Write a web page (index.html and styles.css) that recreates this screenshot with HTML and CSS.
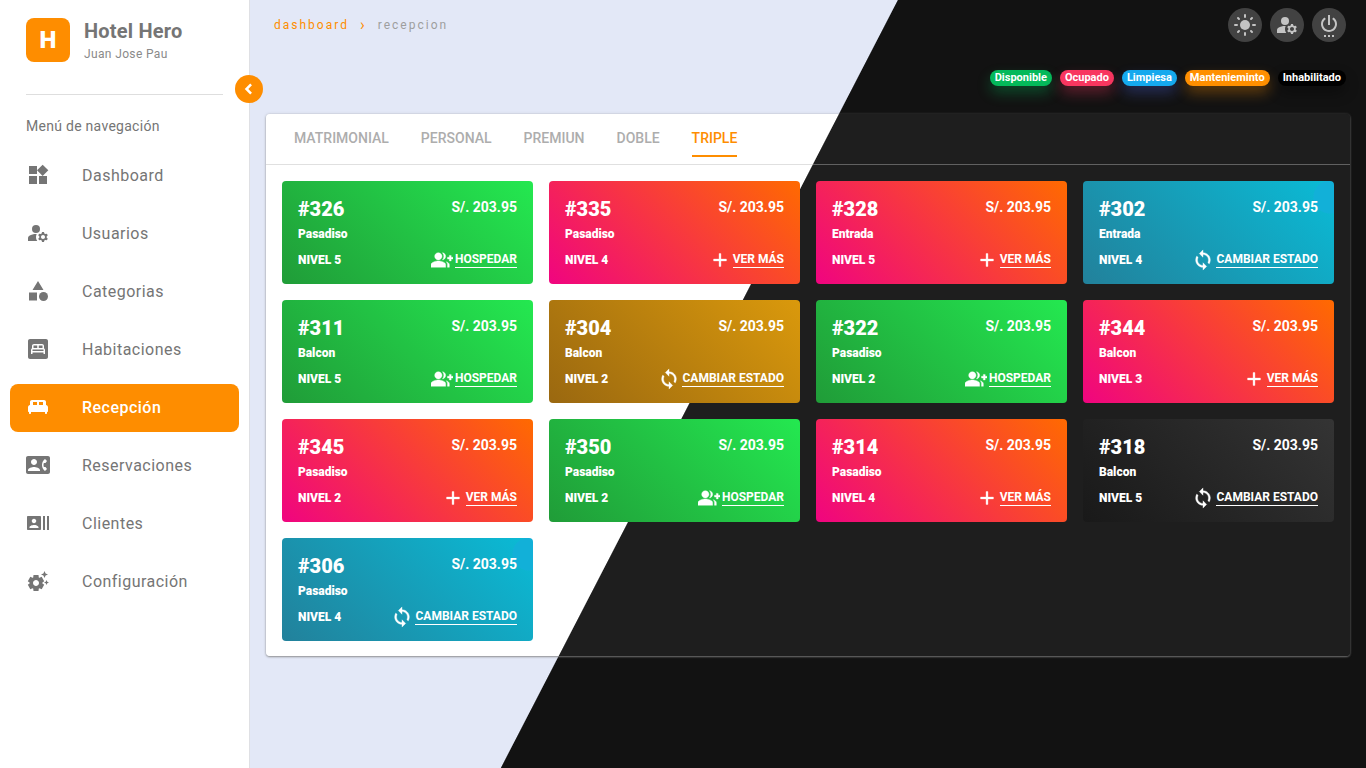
FILE: index.html
```html
<!DOCTYPE html>
<html lang="es">
<head>
<meta charset="utf-8">
<meta name="viewport" content="width=device-width, initial-scale=1">
<title>Hotel Hero - Recepción</title>
<link rel="stylesheet" href="styles.css">
</head>
<body>
<svg class="sprite" aria-hidden="true">
  <symbol id="i-widgets" viewBox="0 0 24 24"><path d="M13 13v8h8v-8h-8zM3 21h8v-8H3v8zM3 3v8h8V3H3zm13.66-1.31L11 7.34 16.66 13l5.66-5.66-5.66-5.65z"/></symbol>
  <symbol id="i-manage" viewBox="0 0 24 24"><circle cx="10" cy="8" r="4"/><path d="M10.67 13.02C10.45 13.01 10.23 13 10 13c-2.42 0-4.68.67-6.61 1.82-.88.52-1.39 1.5-1.39 2.53V20h9.26c-.79-1.13-1.26-2.51-1.26-4 0-1.07.25-2.07.67-2.98zM20.75 16c0-.22-.03-.42-.06-.63l1.14-1.01-1-1.73-1.45.49c-.32-.27-.68-.48-1.08-.63L18 11h-2l-.3 1.49c-.4.15-.76.36-1.08.63l-1.45-.49-1 1.73 1.14 1.01c-.03.21-.06.41-.06.63s.03.42.06.63l-1.14 1.01 1 1.73 1.45-.49c.32.27.68.48 1.08.63L16 21h2l.3-1.49c.4-.15.76-.36 1.08-.63l1.45.49 1-1.73-1.14-1.01c.03-.21.06-.41.06-.63zM17 18c-1.1 0-2-.9-2-2s.9-2 2-2 2 .9 2 2-.9 2-2 2z"/></symbol>
  <symbol id="i-category" viewBox="0 0 24 24"><path d="M12 2l-5.5 9h11zM3 13.500h8v8H3z"/><circle cx="17.500" cy="17.500" r="4.500"/></symbol>
  <symbol id="i-bedroom" viewBox="0 0 24 24"><path fill-rule="evenodd" d="M20 2H4c-1.100 0-2 .9-2 2v16c0 1.100.9 2 2 2h16c1.100 0 2-.9 2-2V4c0-1.100-.9-2-2-2zM19 17h-1.500v-1.500h-11V17H5v-4c0-.8.4-1.400 1-1.700V9c0-1.100.9-2 2-2h8c1.100 0 2 .9 2 2v2.300c.6.3 1 .9 1 1.700zM7.500 8.500V11h3.750V8.500zM12.750 8.500V11h3.750V8.500zM6.500 12.500V14h11v-1.500z"/></symbol>
  <symbol id="i-bed" viewBox="0 0 24 24"><path fill-rule="evenodd" d="M20 10V7c0-1.100-.9-2-2-2H6c-1.100 0-2 .9-2 2v3c-1.100.2-2 1-2 2.200V16c0 .6.4 1 1 1v1c0 .6.4 1 1 1s1-.4 1-1v-1h14v1c0 .6.4 1 1 1s1-.4 1-1v-1c.6 0 1-.4 1-1v-3.800c0-1.200-.9-2-2-2.200zM7 7h4v3H7zM13 7h4v3h-4z"/></symbol>
  <symbol id="i-contact" viewBox="0 0 24 24"><path d="M22 3H2C.9 3 0 3.900 0 5v14c0 1.100.9 2 2 2h20c1.100 0 1.990-.9 1.990-2L24 5c0-1.100-.9-2-2-2zM8 6c1.660 0 3 1.340 3 3s-1.340 3-3 3-3-1.340-3-3 1.340-3 3-3zm6 12H2v-1c0-2 4-3.100 6-3.100s6 1.100 6 3.100v1zm3.850-4h1.640L21 16l-1.990 1.990c-1.310-.98-2.280-2.380-2.730-3.990-.18-.64-.28-1.310-.28-2s.1-1.360.28-2c.45-1.620 1.420-3.010 2.730-3.990L21 8l-1.510 2h-1.640c-.22.63-.35 1.300-.35 2s.13 1.370.35 2z"/></symbol>
  <symbol id="i-actors" viewBox="0 0 24 24"><path d="M21 5v14h2V5h-2zm-4 14h2V5h-2v14zM14 5H2c-.55 0-1 .45-1 1v12c0 .55.45 1 1 1h12c.55 0 1-.45 1-1V6c0-.55-.45-1-1-1zM8 7.750c1.240 0 2.250 1.010 2.250 2.250S9.240 12.250 8 12.250 5.750 11.240 5.750 10 6.760 7.750 8 7.750zM12.500 17h-9v-.75c0-1.500 3-2.250 4.500-2.250s4.500.75 4.500 2.250V17z"/></symbol>
  <symbol id="i-settings" viewBox="0 0 24 24"><path d="M17.410 6.590L15 5.500l2.410-1.090L18.500 2l1.090 2.410L22 5.500l-2.410 1.090L18.500 9zM21.280 12.720L20.500 11l-.78 1.720L18 13.500l1.720.78L20.500 16l.78-1.720L23 13.500zM16.240 14.370l1.940 1.470-2.500 4.330-2.240-.94c-.2.13-.42.26-.64.37L12.500 22h-5l-.3-2.410c-.22-.11-.43-.23-.64-.37l-2.240.94-2.500-4.330 1.940-1.470c-.01-.12-.01-.24-.01-.36s0-.25.01-.37l-1.940-1.470 2.500-4.330 2.240.94c.2-.13.42-.26.64-.37L7.500 6h5l.3 2.410c.22.11.43.23.64.37l2.240-.94 2.500 4.330-1.940 1.470c.01.12.01.24.01.37s0 .24-.01.36zM13 14c0-1.660-1.340-3-3-3s-3 1.340-3 3 1.340 3 3 3 3-1.340 3-3z"/></symbol>
  <symbol id="i-sun" viewBox="0 0 24 24"><circle cx="12" cy="12" r="5"/><path class="stroke" d="M12 2v2M12 20v2M2 12h2M20 12h2M5 5l1 1M18 18l1 1M5 19l1-1M18 6l1-1"/></symbol>
  <symbol id="i-power" viewBox="0 0 24 24"><path d="M7 24h2v-2H7v2zm4 0h2v-2h-2v2zm2-22h-2v10h2V2zm3.560 2.440l-1.450 1.450C16.840 6.940 18 8.830 18 11c0 3.310-2.690 6-6 6s-6-2.690-6-6c0-2.170 1.160-4.060 2.880-5.120L7.440 4.440C5.360 5.880 4 8.280 4 11c0 4.420 3.580 8 8 8s8-3.580 8-8c0-2.720-1.360-5.120-3.440-6.560zM15 24h2v-2h-2v2z"/></symbol>
  <symbol id="i-left" viewBox="0 0 24 24"><path class="chevron" d="M14.500 6.500L9 12l5.500 5.500"/></symbol>
  <symbol id="i-group" viewBox="0 0 24 24"><path d="M22 9V7h-2v2h-2v2h2v2h2v-2h2V9zM8 12c2.210 0 4-1.790 4-4s-1.790-4-4-4-4 1.790-4 4 1.790 4 4 4zM8 13c-2.670 0-8 1.340-8 4v3h16v-3c0-2.660-5.330-4-8-4zM12.510 4.050C13.430 5.110 14 6.490 14 8s-.57 2.890-1.490 3.950C14.470 11.700 16 10.040 16 8s-1.530-3.700-3.490-3.950zM16.530 13.830C17.420 14.660 18 15.700 18 17v3h2v-3c0-1.450-1.590-2.510-3.470-3.170z"/></symbol>
  <symbol id="i-add" viewBox="0 0 24 24"><path d="M19 13h-6v6h-2v-6H5v-2h6V5h2v6h6z"/></symbol>
  <symbol id="i-sync" viewBox="0 0 24 24"><path d="M12 4V1L8 5l4 4V6c3.310 0 6 2.690 6 6 0 1.010-.25 1.970-.7 2.800l1.460 1.460C19.540 15.030 20 13.570 20 12c0-4.420-3.580-8-8-8zm0 14c-3.310 0-6-2.690-6-6 0-1.010.25-1.970.7-2.800L5.240 7.740C4.460 8.970 4 10.430 4 12c0 4.420 3.580 8 8 8v3l4-4-4-4v3z"/></symbol>
</svg>

<div class="app">
  <aside class="sidebar">
    <button class="toggle" type="button" aria-label="Contraer menú"><svg class="icon-sm"><use href="#i-left"/></svg></button>
    <div class="brand">
      <div class="logo">H</div>
      <div>
        <div class="brand-name">Hotel Hero</div>
        <div class="brand-user">Juan Jose Pau</div>
      </div>
    </div>
    <hr class="divider">
    <p class="nav-title">Menú de navegación</p>
    <nav class="nav">
      <a class="nav-item" href="#"><svg class="icon"><use href="#i-widgets"/></svg>Dashboard</a>
      <a class="nav-item" href="#"><svg class="icon"><use href="#i-manage"/></svg>Usuarios</a>
      <a class="nav-item" href="#"><svg class="icon"><use href="#i-category"/></svg>Categorias</a>
      <a class="nav-item" href="#"><svg class="icon"><use href="#i-bedroom"/></svg>Habitaciones</a>
      <a class="nav-item active" href="#" aria-current="page"><svg class="icon"><use href="#i-bed"/></svg>Recepción</a>
      <a class="nav-item" href="#"><svg class="icon"><use href="#i-contact"/></svg>Reservaciones</a>
      <a class="nav-item" href="#"><svg class="icon"><use href="#i-actors"/></svg>Clientes</a>
      <a class="nav-item" href="#"><svg class="icon"><use href="#i-settings"/></svg>Configuración</a>
    </nav>
  </aside>

  <main class="main">
    <header class="topbar">
      <nav class="crumbs" aria-label="Ruta"><a href="#">dashboard</a><span class="sep">›</span><span>recepcion</span></nav>
      <div class="tools">
        <button class="tool" type="button" aria-label="Tema"><svg class="icon"><use href="#i-sun"/></svg></button>
        <button class="tool" type="button" aria-label="Cuenta"><svg class="icon"><use href="#i-manage"/></svg></button>
        <button class="tool" type="button" aria-label="Salir"><svg class="icon"><use href="#i-power"/></svg></button>
      </div>
    </header>

    <div class="legend">
      <span class="badge b-free">Disponible</span>
      <span class="badge b-busy">Ocupado</span>
      <span class="badge b-clean">Limpiesa</span>
      <span class="badge b-repair">Mantenieminto</span>
      <span class="badge b-off">Inhabilitado</span>
    </div>

    <section class="panel">
      <div class="tabs" role="tablist">
        <button class="tab" type="button" role="tab">MATRIMONIAL</button>
        <button class="tab" type="button" role="tab">PERSONAL</button>
        <button class="tab" type="button" role="tab">PREMIUN</button>
        <button class="tab" type="button" role="tab">DOBLE</button>
        <button class="tab selected" type="button" role="tab" aria-selected="true">TRIPLE</button>
      </div>
      <hr class="rule">
      <div class="rooms">
        <article class="room free"><div class="row"><h2>#326</h2><b class="price">S/. 203.95</b></div><p>Pasadiso</p><div class="row foot"><span>NIVEL 5</span><a class="act" href="#"><svg class="icon-act"><use href="#i-group"/></svg><span>HOSPEDAR</span></a></div></article>
        <article class="room busy"><div class="row"><h2>#335</h2><b class="price">S/. 203.95</b></div><p>Pasadiso</p><div class="row foot"><span>NIVEL 4</span><a class="act" href="#"><svg class="icon-act"><use href="#i-add"/></svg><span>VER MÁS</span></a></div></article>
        <article class="room busy"><div class="row"><h2>#328</h2><b class="price">S/. 203.95</b></div><p>Entrada</p><div class="row foot"><span>NIVEL 5</span><a class="act" href="#"><svg class="icon-act"><use href="#i-add"/></svg><span>VER MÁS</span></a></div></article>
        <article class="room clean"><div class="row"><h2>#302</h2><b class="price">S/. 203.95</b></div><p>Entrada</p><div class="row foot"><span>NIVEL 4</span><a class="act" href="#"><svg class="icon-act"><use href="#i-sync"/></svg><span>CAMBIAR ESTADO</span></a></div></article>
        <article class="room free"><div class="row"><h2>#311</h2><b class="price">S/. 203.95</b></div><p>Balcon</p><div class="row foot"><span>NIVEL 5</span><a class="act" href="#"><svg class="icon-act"><use href="#i-group"/></svg><span>HOSPEDAR</span></a></div></article>
        <article class="room repair"><div class="row"><h2>#304</h2><b class="price">S/. 203.95</b></div><p>Balcon</p><div class="row foot"><span>NIVEL 2</span><a class="act" href="#"><svg class="icon-act"><use href="#i-sync"/></svg><span>CAMBIAR ESTADO</span></a></div></article>
        <article class="room free"><div class="row"><h2>#322</h2><b class="price">S/. 203.95</b></div><p>Pasadiso</p><div class="row foot"><span>NIVEL 2</span><a class="act" href="#"><svg class="icon-act"><use href="#i-group"/></svg><span>HOSPEDAR</span></a></div></article>
        <article class="room busy"><div class="row"><h2>#344</h2><b class="price">S/. 203.95</b></div><p>Balcon</p><div class="row foot"><span>NIVEL 3</span><a class="act" href="#"><svg class="icon-act"><use href="#i-add"/></svg><span>VER MÁS</span></a></div></article>
        <article class="room busy"><div class="row"><h2>#345</h2><b class="price">S/. 203.95</b></div><p>Pasadiso</p><div class="row foot"><span>NIVEL 2</span><a class="act" href="#"><svg class="icon-act"><use href="#i-add"/></svg><span>VER MÁS</span></a></div></article>
        <article class="room free"><div class="row"><h2>#350</h2><b class="price">S/. 203.95</b></div><p>Pasadiso</p><div class="row foot"><span>NIVEL 2</span><a class="act" href="#"><svg class="icon-act"><use href="#i-group"/></svg><span>HOSPEDAR</span></a></div></article>
        <article class="room busy"><div class="row"><h2>#314</h2><b class="price">S/. 203.95</b></div><p>Pasadiso</p><div class="row foot"><span>NIVEL 4</span><a class="act" href="#"><svg class="icon-act"><use href="#i-add"/></svg><span>VER MÁS</span></a></div></article>
        <article class="room off"><div class="row"><h2>#318</h2><b class="price">S/. 203.95</b></div><p>Balcon</p><div class="row foot"><span>NIVEL 5</span><a class="act" href="#"><svg class="icon-act"><use href="#i-sync"/></svg><span>CAMBIAR ESTADO</span></a></div></article>
        <article class="room clean"><div class="row"><h2>#306</h2><b class="price">S/. 203.95</b></div><p>Pasadiso</p><div class="row foot"><span>NIVEL 4</span><a class="act" href="#"><svg class="icon-act"><use href="#i-sync"/></svg><span>CAMBIAR ESTADO</span></a></div></article>
      </div>
    </section>
  </main>
</div>
</body>
</html>
```
FILE: styles.css
```css
:root {
  --accent: #fe8d00;
  --grey: #757575;
  --cut: calc(50% + 14px);
  --cut-end: calc(50% + 15px);
}

* { box-sizing: border-box; }

body {
  margin: 0;
  font-family: Roboto, "Liberation Sans", sans-serif;
  background: linear-gradient(117.34deg, #e3e8f7 var(--cut), #121212 var(--cut-end)) fixed;
}

a { color: inherit; text-decoration: none; }
button { font: inherit; border: 0; padding: 0; background: none; cursor: pointer; }
svg { fill: currentColor; flex: none; display: block; }
h2, p { margin: 0; }

.sprite { position: absolute; width: 0; height: 0; }
.stroke { stroke: currentColor; stroke-width: 2; stroke-linecap: round; fill: none; }
.chevron { stroke: currentColor; stroke-width: 3; fill: none; }
.icon { width: 24px; height: 24px; }
.icon-sm { width: 20px; height: 20px; }
.icon-act { width: 22px; height: 22px; stroke: currentColor; stroke-width: 0.4; }

.app { display: flex; min-height: 100vh; }

.sidebar {
  position: relative;
  flex: 0 0 250px;
  padding: 18px 10px;
  background: #fff;
  border-right: 1px solid #dfe0e4;
  color: var(--grey);
}

.toggle {
  position: absolute;
  top: 75px;
  right: -14px;
  width: 28px;
  height: 28px;
  border-radius: 50%;
  background: var(--accent);
  color: #fff;
  display: grid;
  place-items: center;
}

.brand { display: flex; gap: 14px; padding: 0 16px; }
.logo {
  width: 44px;
  height: 44px;
  border-radius: 8px;
  background: var(--accent);
  color: #fff;
  font-size: 24px;
  font-weight: 900;
  line-height: 44px;
  text-align: center;
}
.brand-name { font-size: 20px; font-weight: 700; line-height: 26px; letter-spacing: 0.01em; }
.brand-user { font-size: 12px; line-height: 20px; letter-spacing: 0.03em; color: #8a8a8a; }

.divider { margin: 30px 16px 0; border: 0; height: 1px; background: #dedede; }
.nav-title { margin: 21px 16px 0; font-size: 14px; line-height: 20px; letter-spacing: 0.02em; }

.nav { display: flex; flex-direction: column; gap: 10px; margin-top: 16px; }
.nav-item {
  display: flex;
  align-items: center;
  gap: 32px;
  height: 48px;
  padding: 0 16px 2px;
  border-radius: 8px;
  font-size: 16px;
  letter-spacing: 0.03em;
}
.nav-item.active { background: var(--accent); color: #fff; font-weight: 500; }

.main { flex: 1; min-width: 0; padding: 8px 16px 16px; }

.topbar { display: flex; justify-content: space-between; padding: 0 4px 0 8px; }
.crumbs {
  display: flex;
  gap: 11px;
  color: #9e9e9e;
  font-size: 12px;
  line-height: 34px;
  letter-spacing: 2px;
}
.crumbs a, .sep { color: var(--accent); }
.sep { font-size: 16px; }

.tools { display: flex; gap: 8px; }
.tool {
  width: 34px;
  height: 34px;
  border-radius: 50%;
  background: #424242;
  color: #c4c4c4;
  display: grid;
  place-items: center;
}

.legend { display: flex; justify-content: flex-end; gap: 8px; margin-top: 28px; padding-right: 4px; }
.badge {
  height: 16px;
  padding: 0 5px;
  border-radius: 8px;
  color: #fff;
  font-size: 11px;
  font-weight: 700;
  line-height: 15px;
}
.b-free { background: #04b95a; box-shadow: 0 7px 14px #04b95a55; }
.b-busy { background: #f8365f; box-shadow: 0 7px 14px #f8365f55; }
.b-clean { background: #15a9ee; box-shadow: 0 7px 14px #4a64e255; }
.b-repair { background: #ff8f00; box-shadow: 0 7px 14px #ff8f0055; }
.b-off { background: #000; box-shadow: 0 7px 14px #00000055; }

.panel {
  margin-top: 28px;
  border-radius: 4px;
  background: linear-gradient(117.34deg, #fff var(--cut), #1e1e1e var(--cut-end)) fixed;
  box-shadow: 0 1px 2px #808080cc, 0 0 3px #80808055;
}
.tabs { display: flex; gap: 32px; padding: 8px 28px 7px; }
.tab {
  height: 35px;
  padding-bottom: 2px;
  border-bottom: 2px solid transparent;
  color: #adadad;
  font-size: 14px;
  font-weight: 500;
}
.tab.selected { color: var(--accent); border-color: var(--accent); }
.rule {
  margin: 0;
  border: 0;
  height: 1px;
  background: linear-gradient(117.34deg, #e0e0e0 var(--cut), #616161 var(--cut-end)) fixed;
}

.rooms {
  display: grid;
  grid-template-columns: repeat(4, minmax(0, 1fr));
  gap: 16px;
  padding: 16px 16px 15px;
}
.room { padding: 15px 16px 12px; border-radius: 4px; color: #fff; font-size: 12px; font-weight: 900; }
.row { display: flex; justify-content: space-between; }
.room h2 { font-size: 20px; font-weight: 900; line-height: 26px; }
.price { font-size: 14px; font-weight: 700; line-height: 22px; }
.room p { line-height: 25px; }
.foot { align-items: center; height: 25px; }
.act { display: flex; align-items: center; gap: 2px; font-weight: 700; }
.act span { border-bottom: 1px solid #fff; line-height: 16px; }

.free { background: linear-gradient(45deg, #209c38, #24e850); }
.busy { background: linear-gradient(45deg, #f00480, #ff6a00); }
.clean {
  background:
    radial-gradient(circle at calc(100% - 4px) 16px, #12b0d8 16px, transparent 17px),
    linear-gradient(45deg, #22819b, #0abbd6);
}
.repair { background: linear-gradient(45deg, #9a6810, #da990c); }
.off { background: linear-gradient(45deg, #191919, #343434); }
```
